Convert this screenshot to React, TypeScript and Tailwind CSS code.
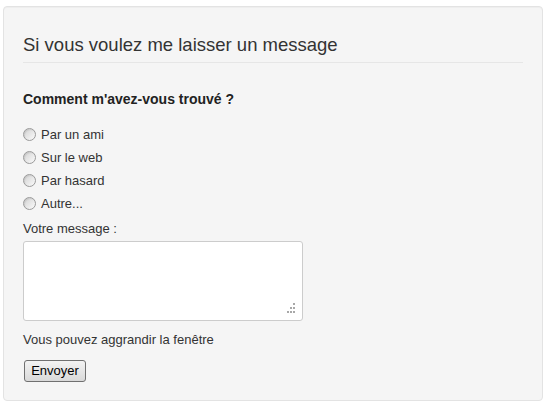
const choices = ["Par un ami", "Sur le web", "Par hasard", "Autre..."];

function Radio() {
  return (
    <span className="block h-[13px] w-[13px] shrink-0 rounded-full border border-[#9a9a9a] bg-linear-to-br from-[#d2d2d2] to-[#fbfbfb] shadow-[inset_1px_1px_1px_rgba(0,0,0,0.08)]" />
  );
}

export default function App() {
  return (
    <div className="min-h-[411px] bg-white pt-[6px] pl-[3px] font-['Liberation_Sans',Arial,sans-serif] text-[13px] text-[#333]">
      <form
        className="h-[395px] w-[540px] rounded-[4px] border border-[#e3e3e3] bg-[#f5f5f5] px-[19px] pt-[26px] shadow-[inset_0_1px_1px_rgba(0,0,0,0.03)]"
        onSubmit={(e) => e.preventDefault()}
      >
        <h3 className="border-b border-[#e6e6e6] pb-[5px] text-[18.5px] leading-[24px] font-normal text-[#333]">
          Si vous voulez me laisser un message
        </h3>

        <h4 className="mt-[26px] text-[14px] leading-[20px] font-bold text-[#222]">
          Comment m'avez-vous trouvé ?
        </h4>

        <div className="mt-[14px]">
          {choices.map((c) => (
            <label key={c} className="flex h-[23px] items-center gap-[5px]">
              <Radio />
              <span>{c}</span>
            </label>
          ))}
        </div>

        <label className="mt-[4px] block leading-[20px]">Votre message :</label>
        <div className="relative mt-[2px] h-[80px] w-[280px]">
          <textarea className="block h-full w-full resize-none rounded-[3px] border border-[#cccccc] bg-white outline-none" />
          <svg
            className="absolute right-[8px] bottom-[8px]"
            width="8"
            height="10"
            viewBox="0 0 8 10"
          >
            <rect x="6" y="0" width="2" height="2" fill="#a8a8a8" />
            <rect x="3" y="4" width="2" height="2" fill="#a8a8a8" />
            <rect x="6" y="4" width="2" height="2" fill="#a8a8a8" />
            <rect x="0" y="8" width="2" height="2" fill="#a8a8a8" />
            <rect x="3" y="8" width="2" height="2" fill="#a8a8a8" />
            <rect x="6" y="8" width="2" height="2" fill="#a8a8a8" />
          </svg>
        </div>

        <p className="mt-[9px] leading-[20px]">Vous pouvez aggrandir la fenêtre</p>

        <button
          type="submit"
          className="mt-[10px] ml-[1px] flex h-[22px] w-[62px] items-center justify-center rounded-[3px] border border-[#707070] bg-linear-to-b from-[#f3f3f3] to-[#d9d9d9] text-[13px] text-black"
        >
          Envoyer
        </button>
      </form>
    </div>
  );
}
